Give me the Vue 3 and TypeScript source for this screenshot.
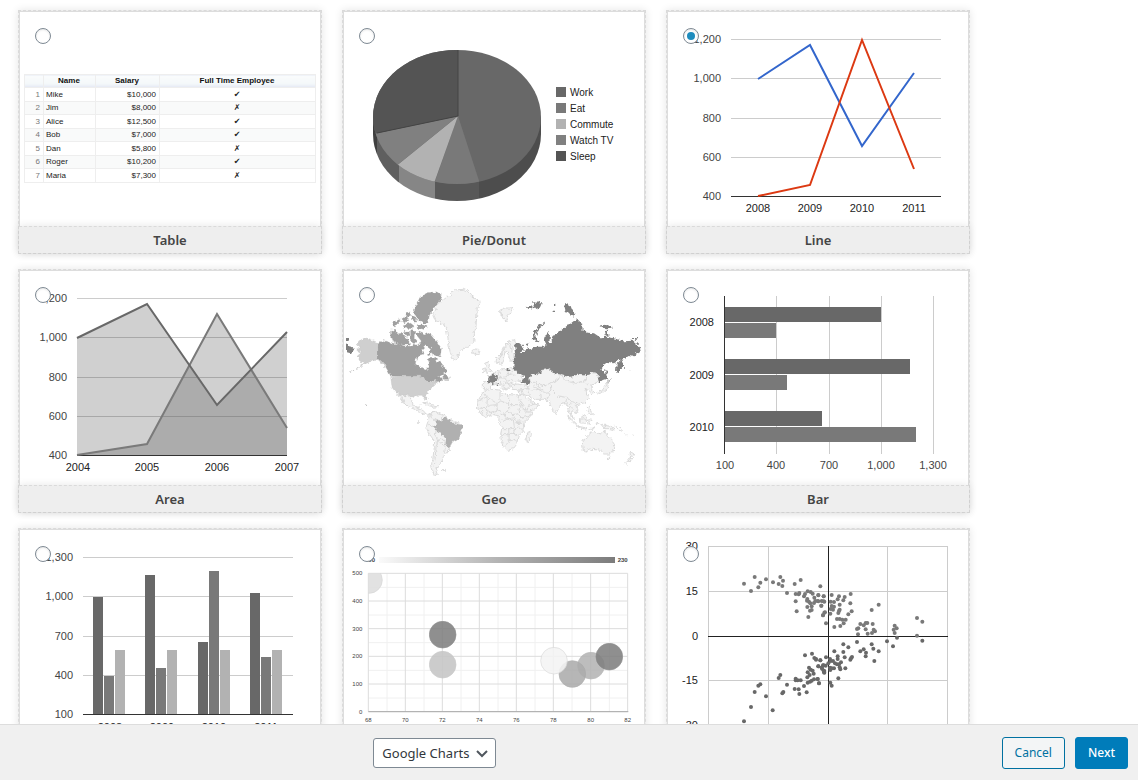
<script setup lang="ts">
import { ref } from 'vue'

interface ChartType {
  id: string
  title: string
}

interface Tick {
  at: number
  text: string
}

const chartTypes: ChartType[] = [
  { id: 'table', title: 'Table' },
  { id: 'pie', title: 'Pie/Donut' },
  { id: 'line', title: 'Line' },
  { id: 'area', title: 'Area' },
  { id: 'geo', title: 'Geo' },
  { id: 'bar', title: 'Bar' },
  { id: 'column', title: 'Column' },
  { id: 'bubble', title: 'Bubble' },
  { id: 'scatter', title: 'Scatter' },
]
const selected = ref('line')
const library = ref('Google Charts')

const employees = [
  { name: 'Mike', salary: '$10,000', full: true },
  { name: 'Jim', salary: '$8,000', full: false },
  { name: 'Alice', salary: '$12,500', full: true },
  { name: 'Bob', salary: '$7,000', full: true },
  { name: 'Dan', salary: '$5,800', full: false },
  { name: 'Roger', salary: '$10,200', full: true },
  { name: 'Maria', salary: '$7,300', full: false },
]

const legend = [
  { text: 'Work', color: '#686868' },
  { text: 'Eat', color: '#797979' },
  { text: 'Commute', color: '#b2b2b2' },
  { text: 'Watch TV', color: '#808080' },
  { text: 'Sleep', color: '#545454' },
]

const rows = [27, 66, 106, 145, 184]
const valueTicks: Tick[] = ['1,200', '1,000', '800', '600', '400'].map((text, i) => ({ at: rows[i], text }))
const columnTicks: Tick[] = ['1,300', '1,000', '700', '400', '100'].map((text, i) => ({ at: rows[i], text }))
const lineYears: Tick[] = [90, 142, 194, 246].map((at, i) => ({ at, text: String(2008 + i) }))
const areaYears: Tick[] = [58, 127, 197, 267].map((at, i) => ({ at, text: String(2004 + i) }))

const barTicks: Tick[] = [
  { at: 57, text: '100' },
  { at: 108, text: '400' },
  { at: 161, text: '700' },
  { at: 213, text: '1,000' },
  { at: 265, text: '1,300' },
]
const barYears: Tick[] = [
  { at: 55, text: '2008' },
  { at: 108, text: '2009' },
  { at: 160, text: '2010' },
]
const bars = [
  { y: 36, end: 213, color: '#686868' },
  { y: 52, end: 108, color: '#797979' },
  { y: 88, end: 242, color: '#686868' },
  { y: 104, end: 119, color: '#797979' },
  { y: 140, end: 154, color: '#686868' },
  { y: 156, end: 248, color: '#797979' },
]

const columnColors = ['#686868', '#797979', '#b2b2b2']
const columns = [
  { x: 73, tops: [67, 146, 120] },
  { x: 125, tops: [45, 138, 120] },
  { x: 178, tops: [112, 41, 120] },
  { x: 230, tops: [63, 127, 120] },
]

const bubbleX: Tick[] = [85, 196, 307, 418, 529, 640, 752, 863].map((at, i) => ({ at, text: String(68 + i * 2) }))
const bubbleY: Tick[] = [160, 243, 326, 409, 492, 575].map((at, i) => ({ at, text: String(500 - i * 100) }))
const bubbles = [
  { x: 87, y: 180, color: '#dedede', edge: '#d2d2d2' },
  { x: 308, y: 344, color: '#808080', edge: '#808080' },
  { x: 308, y: 434, color: '#c6c6c6', edge: '#c2c2c2' },
  { x: 753, y: 437, color: '#b4b4b4', edge: '#b0b0b0' },
  { x: 697, y: 462, color: '#acacac', edge: '#a8a8a8' },
  { x: 642, y: 422, color: '#f4f4f4', edge: '#d4d4d4' },
  { x: 808, y: 410, color: '#808080', edge: '#808080' },
]

const pair = (s: string, dx = 0) =>
  s.split(' ').map((p) => {
    const [x, y] = p.split(',').map(Number)
    return { x: x + dx, y }
  })
const dots = [
  ...pair('207,146 228,168 239,126 250,157 256,143 273,133 294,142 311,147 316,126 322,153 324,137 336,174 359,147 377,135 362,177 371,178 373,174 362,199 365,229 387,184 390,177 398,169 407,171 413,176 397,192 402,200 406,205 397,216 410,214 405,227 410,225 400,246 396,197 418,188 421,198 417,204 430,181 436,154 430,199 439,212 446,184 446,199 448,233 444,241 440,198'),
  ...pair('10,180 26,184 19,212 8,198 28,200 30,232 24,241 33,265 50,180 47,200 57,201 72,184 89,186 107,177 106,205 68,193 85,196 74,209 50,213 57,215 47,222 54,224 72,228 70,234 74,224 46,236 110,229 100,238 66,252 74,252 82,254 92,254 86,265 76,273 58,276 170,225 191,209 136,267 146,271 152,264 157,264 173,267 130,280 126,282 152,283 176,284 180,289 129,298 158,296 171,294 239,272 245,280 236,284 239,294 246,308 306,249 322,260 306,302 322,317 216,319 234,334', 420),
  ...pair('126,321 85,328 100,337 58,349 85,351 68,364 89,367 108,370 111,366 106,374 136,349 146,343 153,353 152,364 170,328 175,341 191,349 178,378 33,367 45,372 16,376 3,372 47,378 54,378 60,385 10,394 20,398 24,391 32,392 45,398 50,400 28,408 57,400 66,388 72,388 78,382 74,397 76,403 91,400 70,430 46,405 8,432 46,443 50,452 12,445 28,413 40,385 68,372', 420),
  ...pair('207,559 228,516 239,471 250,452 256,448 273,484 293,526 311,429 316,420 322,475 325,471 336,449 359,462 371,463 373,477 362,431 362,436 368,436 377,436 387,453 395,472 398,443 397,427 398,412 402,398 407,404 413,407 416,416 404,420 405,440 410,437 417,433 428,432 432,445 390,361 411,356 418,369 423,374 436,376 430,394 440,398 446,391 446,408 442,402 447,412'),
]
const scatterTicks: Tick[] = [
  { at: 20, text: '30' },
  { at: 65, text: '15' },
  { at: 110, text: '0' },
  { at: 154, text: '-15' },
  { at: 199, text: '-30' },
]
</script>

<template>
  <div class="page">
    <main class="gallery">
      <label v-for="type in chartTypes" :key="type.id" class="card">
        <span class="thumb">
          <input v-model="selected" class="pick" type="radio" name="chart-type" :value="type.id" />

          <table v-if="type.id === 'table'" class="sheet">
            <thead>
              <tr>
                <th class="num"></th>
                <th class="name">Name</th>
                <th class="salary">Salary</th>
                <th>Full Time Employee</th>
              </tr>
            </thead>
            <tbody>
              <tr v-for="(row, i) in employees" :key="row.name">
                <td class="num">{{ i + 1 }}</td>
                <td class="name">{{ row.name }}</td>
                <td class="salary">{{ row.salary }}</td>
                <td class="mark">{{ row.full ? '✔' : '✗' }}</td>
              </tr>
            </tbody>
          </table>

          <svg v-else-if="type.id === 'pie'" class="chart" viewBox="0 0 300 214">
            <defs>
              <clipPath id="pie-top"><ellipse cx="113" cy="105" rx="84" ry="67" /></clipPath>
              <clipPath id="pie-side"><path d="M29 105V122A84 67 0 0 0 197 122V105Z" /></clipPath>
            </defs>
            <g clip-path="url(#pie-side)">
              <rect x="28" y="104" width="5" height="90" fill="#3f3f3f" />
              <rect x="33" y="104" width="22" height="90" fill="#5f5f5f" />
              <rect x="55" y="104" width="36" height="90" fill="#868686" />
              <rect x="91" y="104" width="44" height="90" fill="#585858" />
              <rect x="135" y="104" width="64" height="90" fill="#4d4d4d" />
            </g>
            <g clip-path="url(#pie-top)">
              <rect x="28" y="37" width="172" height="140" fill="#686868" />
              <path fill="#797979" d="M114 104L138 178H88Z" />
              <path fill="#b2b2b2" d="M114 104L88 177 37 178 46 159Z" />
              <path fill="#808080" d="M114 104L46 159 20 150V124Z" />
              <path fill="#545454" d="M114 104L20 124V30H114Z" />
              <path fill="none" stroke="#444" d="M114 38V104L33 121" />
            </g>
            <g v-for="(item, i) in legend" :key="item.text">
              <rect x="212" :y="75 + i * 16" width="10" height="10" :fill="item.color" />
              <text class="legend" x="226" :y="84 + i * 16">{{ item.text }}</text>
            </g>
          </svg>

          <svg v-else-if="type.id === 'line'" class="chart" viewBox="0 0 300 214">
            <g v-for="t in valueTicks" :key="t.text">
              <rect x="63" :y="t.at" width="210" height="1" :fill="t.text === '400' ? '#333' : '#ccc'" />
              <text class="tick end" x="53" :y="t.at + 4">{{ t.text }}</text>
            </g>
            <polyline fill="none" stroke="#3366cc" stroke-width="2" points="90,67 142,33 194,134 246,61" />
            <polyline fill="none" stroke="#dc3912" stroke-width="2" points="90,184 142,173 194,28 246,157" />
            <text v-for="t in lineYears" :key="t.text" class="tick dark mid" :x="t.at" y="200">{{ t.text }}</text>
          </svg>

          <svg v-else-if="type.id === 'area'" class="chart" viewBox="0 0 300 214">
            <g v-for="t in valueTicks" :key="t.text">
              <rect x="57" :y="t.at" width="210" height="1" :fill="t.text === '400' ? '#333' : '#ccc'" />
              <text class="tick end" x="47" :y="t.at + 4">{{ t.text }}</text>
            </g>
            <path fill="#d0d0d0" d="M57 67L127 33 197 134 267 61V184H57Z" />
            <path fill="#d0d0d0" d="M57 184L127 173 197 43 267 157V184Z" />
            <path fill="#acacac" d="M57 184L127 173 170 94 197 134 231 98 267 157V184Z" />
            <path stroke="#a8a8a8" d="M57 66.5H150M184 66.5H211M262 66.5H267M57 106.5H163M178 106.5H223M236 106.5H267M57 145.5H142M260 145.5H267" />
            <path stroke="#919191" d="M163 106.5H178M223 106.5H236M142 145.5H260" />
            <path stroke="#333" d="M57 184.5H267" />
            <polyline fill="none" stroke="#7a7a7a" stroke-width="2" points="57,184 127,173 197,43 267,157" />
            <polyline fill="none" stroke="#686868" stroke-width="2" points="57,67 127,33 197,134 267,61" />
            <text v-for="t in areaYears" :key="t.text" class="tick dark mid" :x="t.at" y="200">{{ t.text }}</text>
          </svg>

          <svg v-else-if="type.id === 'geo'" class="chart map" viewBox="12 -27 900 642">
            <defs>
              <filter id="coast" x="-5%" y="-5%" width="110%" height="110%">
                <feTurbulence type="fractalNoise" baseFrequency="0.1" numOctaves="2" seed="4" result="noise" />
                <feDisplacementMap in="SourceGraphic" in2="noise" scale="14" xChannelSelector="R" yChannelSelector="G" />
              </filter>
            </defs>
            <g filter="url(#coast)">
              <g class="land">
                <path d="M278 105L290 90 286 80 305 62 325 48 342 30 370 28 388 36 395 48 425 66 412 82 410 110 408 140 400 165 402 185 385 200 366 208 356 222 350 240 338 236 330 215 326 190 322 165 318 140 300 128 284 118Z" />
                <path d="M394 214L402 207 416 208 420 216 408 224 398 221Z" />
                <path d="M170 342L190 346 204 348 214 358 220 376 234 382 240 374 234 386 250 392 258 402 270 404 264 406 246 400 224 388 206 380 194 368 184 350 190 370 178 352Z" />
                <path d="M248 368l14-2 16 8 18 6-20 2-10-6Z" />
                <path d="M270 400L282 394 304 402 320 410 332 418 346 428 368 436 366 452 354 478 340 486 330 506 318 520 310 530 304 546 294 560 288 572 292 584 278 580 272 562 278 540 282 510 284 484 268 462 258 442 264 424Z" />
                <path fill="none" d="M270 402L276 418 290 418M306 404L304 420M318 410V422M264 430L280 440 288 452 286 470 294 480 288 500 286 530 282 560M290 478L306 476 318 492M298 486L316 500 314 520" />
                <path d="M306 570l8-2-2 5Z" />
                <path d="M434 250L444 246 448 260 454 274 436 280 440 266ZM428 266l8-2 0 10-8 4Z" />
              </g>
              <g fill="#a0a0a0" stroke="#979797">
                <path d="M114 188L130 182 150 188 170 192 190 198 212 199 222 192 235 197 248 178 256 190 246 210 252 222 240 226 228 236 226 252 240 262 260 268 262 276 264 262 268 250 262 238 276 232 288 236 292 248 300 242 306 256 318 266 320 276 304 284 292 290 290 300 278 304 262 310 254 296 240 290 152 288 146 276 138 262 132 248 120 242 114 240Z" />
                <path d="M308 290l8-8 10 8 2 8-14 0ZM290 292l10-3 8 8-8 10-10-4Z" />
                <path d="M226 160L236 156 250 162 262 158 276 166 290 184 304 206 300 230 288 226 276 220 270 226 262 222 276 208 266 200 250 190 240 178Z" />
                <path d="M152 150l14 2 6 10 14-2 8 10 10 8 4 14-20 4-18-6-14-8-4-14ZM190 155l16-2 4 12-10 4ZM212 152l12 2-2 18 10 12-8 8-12-8Z" />
                <path d="M158 128L176 118 184 122 172 134 160 138ZM186 116l14-8 6 14-14 6ZM196 98l12-2 4 10-10 4ZM190 134l22-4 10 8-6 8-24-2ZM214 106l10 4 10 16-12 0ZM232 134l18 2 12 4-8 8-22-4Z" />
                <path d="M220 90L232 70 240 52 262 38 290 36 306 46 300 60 288 76 276 92 268 106 264 128 248 130 236 122 228 108Z" />
              </g>
              <g fill="#cfcfcf" stroke="#bdbdbd">
                <path d="M114 188L94 180 78 174 62 180 52 194 62 202 50 210 64 218 52 228 60 244 74 246 64 256 84 248 98 240 114 242 126 250 136 262 132 248 114 238Z" />
                <path fill="none" stroke-width="3" stroke-dasharray="8 4" d="M66 258L50 268 30 277" />
                <path d="M152 290L240 288 256 298 264 310 290 302 286 314 272 326 264 338 256 346 262 360 254 358 246 346 232 346 216 354 204 346 188 346 168 338 156 322Z" />
              </g>
              <path fill="#b0b0b0" d="M290 418L302 422 318 412 330 418 336 428 368 436 364 456 356 478 340 486 328 506 316 494 318 478 304 460 290 452 278 440 290 434Z" />
              <path fill="#808080" d="M18 190L30 200 44 208 32 220 18 216ZM18 174h8v6h-8Z" />
              <path fill="#c4c4c4" d="M76 374h5v4h-5ZM232 424h4v4h-4ZM18 462h3v3h-3Z" />

              <g transform="translate(450 0)">
                <g class="land">
                  <path d="M28 92l14-8 22 0 4 12-14 10-4 18-8-6-8-16Z" />
                  <path d="M18 250L20 232 34 218 44 196 56 184 74 178 76 190 68 200 72 225 70 240 58 240 56 225 48 215 42 240 34 256 26 246Z" />
                  <path fill="none" d="M28 240L34 222 46 200 60 190 66 196M58 192L64 214" />
                  <path d="M-20 308L2 306 2 284 16 276 30 270 50 268 70 262 95 280 98 300 80 305 60 312 56 325 46 330 40 314 28 304 44 328 40 330 24 310 8 312-6 328-20 326Z" />
                  <path fill="none" d="M26 272L30 290 44 292 50 304 68 300M50 268L54 284 76 286M30 290L24 302M44 292L64 284M40 306L60 312M70 264L66 280" />
                  <path d="M62 316L80 312 110 316 114 326 90 330 66 328Z" />
                  <path d="M-18 332L10 328 30 330 36 342 60 344 80 346 92 372 106 396 128 396 120 410 100 430 102 452 88 466 84 488 70 506 50 512 44 506 34 480 32 462 36 442 26 424 28 408 10 404-10 412-26 404-38 384-36 362Z" />
                  <path fill="none" d="M-34 364L-10 350 20 370 30 362 30 334M-10 350L-20 334M-34 384L-10 386-8 356M-10 386L0 376 20 374M20 374L22 390 0 398-12 388M30 362L56 372V344M56 372V390L40 402 22 390M60 374H92M56 390L64 404 84 402 92 376M84 402L96 414 120 406M40 402L50 416 74 414 80 430 100 430M36 424L58 416 70 420 74 446 56 446 34 446M74 446L86 440 100 452M34 464H58L72 462 84 466M56 446L58 484 46 496M58 484L72 476 80 488M74 446L70 462M-24 404L-22 390M-8 408L-10 390M4 404V396M14 404V394M88 414L86 432" />
                  <path d="M110 462L122 454 124 464 116 488 108 484Z" />
                  <path d="M84 346L100 346 120 360 136 372 146 376 130 390 108 394 96 372Z" />
                  <path d="M84 332L112 326 122 310 118 292 126 284 150 280 156 270 176 266 196 282 216 286 240 290 262 284 282 286 300 278 316 280 328 292 318 310 306 316 304 326 312 340 306 344 298 332 288 328 290 344 298 356 286 368 266 372 256 374 264 390 258 402 246 392 244 400 250 416 240 402 234 380 226 366 208 378 200 394 196 404 184 384 178 364 160 358 134 358 116 348 100 344 88 346Z" />
                  <path fill="none" d="M124 306L144 312 166 318 182 308 200 300 216 288 230 304 260 310 290 300 288 290M182 308L186 330 204 348 230 352 244 364 262 368M112 326L130 330 150 328 166 340 178 338 186 330M150 328L154 356M178 338L170 362M130 318L150 330M230 352L228 366M244 364L240 382 252 388M290 312L306 316M100 344L96 330M112 328L118 346M108 392L120 376 136 372M136 302L142 318 160 330" />
                  <path d="M320 338L336 332 346 318 350 306 356 300 352 326 340 336 324 342Z" />
                  <path d="M232 406l20 18 16 16-8-2-22-22ZM260 438l30 6-2 4-26-6ZM268 416L284 404 290 414 284 430 270 428ZM292 420l12 0-8 6 6 10-8-2ZM330 430L345 436 366 440 374 450 360 446 344 446ZM292 380l8-2 2 14 6 12-8 2-6-14ZM294 446l20-2-10 6ZM318 428l8 6-6 2Z" />
                  <path fill="none" d="M344 432V446M268 418L284 416M374 436l10 8M388 446l10 6M404 460l6 6M428 464l6 2" />
                  <path d="M278 494L276 480 288 472 300 460 312 454 322 460 334 462 344 450 350 466 362 478 374 494 370 510 358 522 340 522 328 510 306 508 290 516 280 514Z" />
                  <path d="M352 532h8l-2 6-5 0ZM420 514L432 522 422 536ZM420 536L428 536 410 552 404 548Z" />
                </g>
                <g fill="#808080">
                  <path d="M-8 286L2 290 10 280 24 290 20 304 8 312-4 308-2 296ZM50 264h8v6h-8ZM23 310h4v7h-4Z" />
                  <path d="M74 188L84 186 98 198 102 208 88 216 104 216 110 205 120 208 140 200 158 200 170 196 162 178 172 160 180 164 178 188 186 190 184 168 200 164 208 155 220 145 240 132 258 118 276 128 278 150 290 158 312 160 330 172 350 170 380 176 400 184 430 182 446 196 452 212 440 220 428 230 416 228 400 238 388 240 372 250 356 246 340 256 334 268 348 282 350 296 338 300 326 310 320 306 330 290 318 278 306 276 298 284 282 286 262 284 240 290 216 286 196 280 176 266 154 270 150 280 124 284 118 296 122 310 110 314 94 304 104 292 80 278 70 262 72 235 78 215Z" />
                  <path d="M128 178L132 158 146 138 168 126 160 136 146 148 136 170 146 184 136 182ZM222 74l14-4 6 16 14 12-2 12-14-4-14-16ZM328 138l14-4 24 4 2 8-20 2ZM342 154l8-2 6 14-12 2ZM432 174h10v5h-10ZM394 238L400 256 384 282 378 272 380 252ZM346 268l6 14 2 16-8-2ZM110 80l14-4 4 8-12 4ZM130 66l10 2 4-6 4 8 10 0-4 10-10 4-12 4ZM192 74h4v4h-4ZM188 92h4v4h-4ZM402 262h4v4h-4ZM108 192l12-4-4 10Z" />
                  <path fill="none" stroke="#b4b4b4" stroke-width="3" d="M352 306l14-10M418 272l4 2" />
                </g>
              </g>
            </g>
          </svg>

          <svg v-else-if="type.id === 'bar'" class="chart" viewBox="0 0 300 214">
            <g v-for="t in barTicks" :key="t.text">
              <rect v-if="t.text !== '100'" :x="t.at" y="25" width="1" height="158" fill="#ccc" />
              <text class="tick mid" :x="t.at" y="198">{{ t.text }}</text>
            </g>
            <rect v-for="bar in bars" :key="bar.y" x="56" :y="bar.y" :width="bar.end - 56" height="15" :fill="bar.color" />
            <rect x="56" y="25" width="1" height="158" fill="#333" />
            <text v-for="t in barYears" :key="t.text" class="tick dark end" x="46" :y="t.at">{{ t.text }}</text>
          </svg>

          <svg v-else-if="type.id === 'column'" class="chart" viewBox="0 0 300 214">
            <g v-for="t in columnTicks" :key="t.text">
              <rect x="63" :y="t.at" width="210" height="1" fill="#ccc" />
              <text class="tick end" x="53" :y="t.at + 4">{{ t.text }}</text>
            </g>
            <g v-for="group in columns" :key="group.x">
              <rect v-for="(top, i) in group.tops" :key="i" :x="group.x + i * 11" :y="top" width="10" :height="184 - top" :fill="columnColors[i]" />
            </g>
            <rect x="63" y="184" width="210" height="1" fill="#333" />
            <text v-for="t in lineYears" :key="t.text" class="tick dark mid" :x="t.at" y="201">{{ t.text }}</text>
          </svg>

          <svg v-else-if="type.id === 'bubble'" class="chart" viewBox="12 30 900 642">
            <defs>
              <linearGradient id="scale">
                <stop offset="0" stop-color="#fafafa" />
                <stop offset="0.5" stop-color="#b4b4b4" />
                <stop offset="1" stop-color="#7c7c7c" />
              </linearGradient>
              <clipPath id="plot"><rect x="85" y="160" width="780" height="416" /></clipPath>
            </defs>
            <text class="small strong end" x="105" y="126">90</text>
            <rect x="117" y="111" width="708" height="18" fill="url(#scale)" />
            <text class="small strong" x="833" y="126">230</text>
            <g stroke="#f0f0f0" stroke-width="3">
              <path v-for="t in bubbleX.slice(0, 7)" :key="t.at" :d="`M${t.at + 56} 160V575`" />
              <path v-for="t in bubbleY.slice(0, 5)" :key="t.at" :d="`M85 ${t.at + 42}H863`" />
            </g>
            <g stroke="#dcdcdc" stroke-width="3">
              <path v-for="t in bubbleX" :key="t.at" :d="`M${t.at} 160V575`" />
              <path v-for="t in bubbleY" :key="t.at" :d="`M85 ${t.at}H863`" />
            </g>
            <path stroke="#aaa" stroke-width="3" d="M85 575H865" />
            <g clip-path="url(#plot)">
              <circle v-for="(b, i) in bubbles" :key="i" :cx="b.x" :cy="b.y" r="40" :fill="b.color" :stroke="b.edge" stroke-width="2" opacity="0.88" />
            </g>
            <text v-for="t in bubbleY" :key="t.text" class="small end" x="67" :y="t.at + 6">{{ t.text }}</text>
            <text v-for="t in bubbleX" :key="t.text" class="small mid" :x="t.at" y="605">{{ t.text }}</text>
          </svg>

          <svg v-else class="chart" viewBox="0 0 300 214">
            <g fill="#ccc">
              <rect x="40" y="16" width="1" height="179" />
              <rect x="100" y="16" width="1" height="179" />
              <rect x="219" y="16" width="1" height="179" />
              <rect x="279" y="16" width="1" height="179" />
              <rect x="40" y="16" width="240" height="1" />
              <rect x="40" y="61" width="240" height="1" />
              <rect x="40" y="150" width="240" height="1" />
              <rect x="40" y="195" width="240" height="1" />
            </g>
            <g fill="#222">
              <rect x="160" y="16" width="1" height="179" />
              <rect x="40" y="106" width="240" height="1" />
            </g>
            <svg x="0" y="0" width="300" height="214" viewBox="-21 -15 900 642">
              <circle v-for="(d, i) in dots" :key="i" :cx="d.x" :cy="d.y" r="6" :fill="d.y < 303 ? '#797979' : '#686868'" />
            </svg>
            <text v-for="t in scatterTicks" :key="t.text" class="tick dark end" x="30" :y="t.at">{{ t.text }}</text>
          </svg>
        </span>
        <span class="title">{{ type.title }}</span>
      </label>
    </main>

    <footer class="toolbar">
      <div class="library">
        <div class="select-box">
          <select v-model="library" aria-label="Chart library">
            <option>Google Charts</option>
            <option>DataTable</option>
            <option>ChartJS</option>
          </select>
          <svg class="chevron" viewBox="0 0 12 8"><path d="M1 1l5 5 5-5" fill="none" stroke="#50575e" stroke-width="2" /></svg>
        </div>
      </div>
      <div class="actions">
        <button type="button" class="button">Cancel</button>
        <button type="button" class="button primary">Next</button>
      </div>
    </footer>
  </div>
</template>

<style scoped>
.page {
  display: flex;
  flex-direction: column;
  height: 100vh;
  background: #fff;
  font-family: 'Noto Sans', 'Open Sans', sans-serif;
  color: #444;
}
.gallery {
  flex: 1;
  min-height: 0;
  overflow-y: auto;
  scrollbar-width: none;
  display: flex;
  flex-wrap: wrap;
  align-content: flex-start;
  gap: 15px 20px;
  padding: 10px 18px;
}
.card {
  box-sizing: border-box;
  width: 304px;
  border: 1px dashed #dadada;
  background: #eee;
  box-shadow: 0 0 8px rgba(0, 0, 0, 0.1);
}
.thumb {
  position: relative;
  display: block;
  height: 214px;
  border: 1px solid #ddd;
  border-bottom: 0;
  background: #fff;
}
.chart {
  display: block;
  width: 100%;
  height: 100%;
}
.pick {
  position: absolute;
  z-index: 1;
  top: 16px;
  left: 15px;
  box-sizing: border-box;
  width: 16px;
  height: 16px;
  margin: 0;
  padding: 3px;
  appearance: none;
  border: 1px solid #7e8993;
  border-radius: 50%;
  background: #fff;
  box-shadow: inset 0 1px 2px rgba(0, 0, 0, 0.1);
}
.pick:checked::before {
  content: '';
  display: block;
  width: 8px;
  height: 8px;
  border-radius: 50%;
  background: #1e8cbe;
}
.title {
  position: relative;
  display: block;
  border-top: 1px dashed #dadada;
  background: #eee;
  box-shadow: 0 0 8px rgba(0, 0, 0, 0.1);
  font-size: 13px;
  font-weight: 600;
  line-height: 26px;
  text-align: center;
}
.sheet {
  position: relative;
  top: 62px;
  width: 292px;
  margin: 0 auto;
  border-collapse: collapse;
  table-layout: fixed;
  font: 8px/12px 'Liberation Sans', sans-serif;
  color: #222;
}
.sheet th,
.sheet td {
  box-sizing: border-box;
  height: 13px;
  padding: 0 3px 0 2px;
  border: 1px solid #eee;
}
.sheet th {
  background: linear-gradient(#fafcfc, #f4f8fa 70%, #e4e8f4);
  color: #111;
}
.sheet tr:nth-child(odd) td {
  height: 14px;
}
.sheet tr:nth-child(even) td {
  background: #f9fafa;
}
.sheet .num {
  width: 19px;
  color: #777;
  text-align: right;
}
.sheet .name {
  width: 52px;
}
.sheet .salary {
  width: 64px;
}
.sheet td.salary {
  text-align: right;
}
.sheet .mark {
  font-family: 'DejaVu Sans', sans-serif;
  text-align: center;
}
.tick {
  font: 11px 'Liberation Sans', sans-serif;
  fill: #444;
}
.legend {
  font: 10px 'Liberation Sans', sans-serif;
  fill: #222;
}
.small {
  font: 18px 'Liberation Sans', sans-serif;
  fill: #444;
}
.strong {
  font-weight: 700;
}
.dark {
  fill: #222;
}
.end {
  text-anchor: end;
}
.mid {
  text-anchor: middle;
}
.land {
  fill: #f3f3f3;
  stroke: #dadada;
  stroke-width: 3;
}
.toolbar {
  position: relative;
  z-index: 2;
  box-sizing: border-box;
  display: flex;
  align-items: center;
  height: 56px;
  padding: 0 10px;
  border-top: 1px solid #ddd;
  background: #f0f0f0;
}
.library {
  flex: 0 0 76%;
  display: flex;
  justify-content: center;
}
.select-box {
  position: relative;
}
select {
  display: block;
  box-sizing: border-box;
  width: 123px;
  height: 30px;
  padding: 0 24px 0 8px;
  appearance: none;
  border: 1px solid #7e8993;
  border-radius: 3px;
  background: #fff;
  font: 13px 'Noto Sans', 'Open Sans', sans-serif;
  color: #32373c;
}
.chevron {
  position: absolute;
  right: 8px;
  top: 12px;
  width: 12px;
  height: 8px;
  pointer-events: none;
}
.actions {
  display: flex;
  flex: 1;
  justify-content: flex-end;
  gap: 10px;
}
.button {
  box-sizing: border-box;
  min-width: 53px;
  height: 32px;
  padding: 0 12px;
  border: 1px solid #0071a1;
  border-radius: 3px;
  background: #f3f5f6;
  font: 12px 'Noto Sans', 'Open Sans', sans-serif;
  color: #0071a1;
}
.primary {
  border-color: #007cba;
  background: #007cba;
  font-weight: 500;
  color: #fff;
}
</style>

<style>
html,
body {
  background: #fff;
}
</style>
